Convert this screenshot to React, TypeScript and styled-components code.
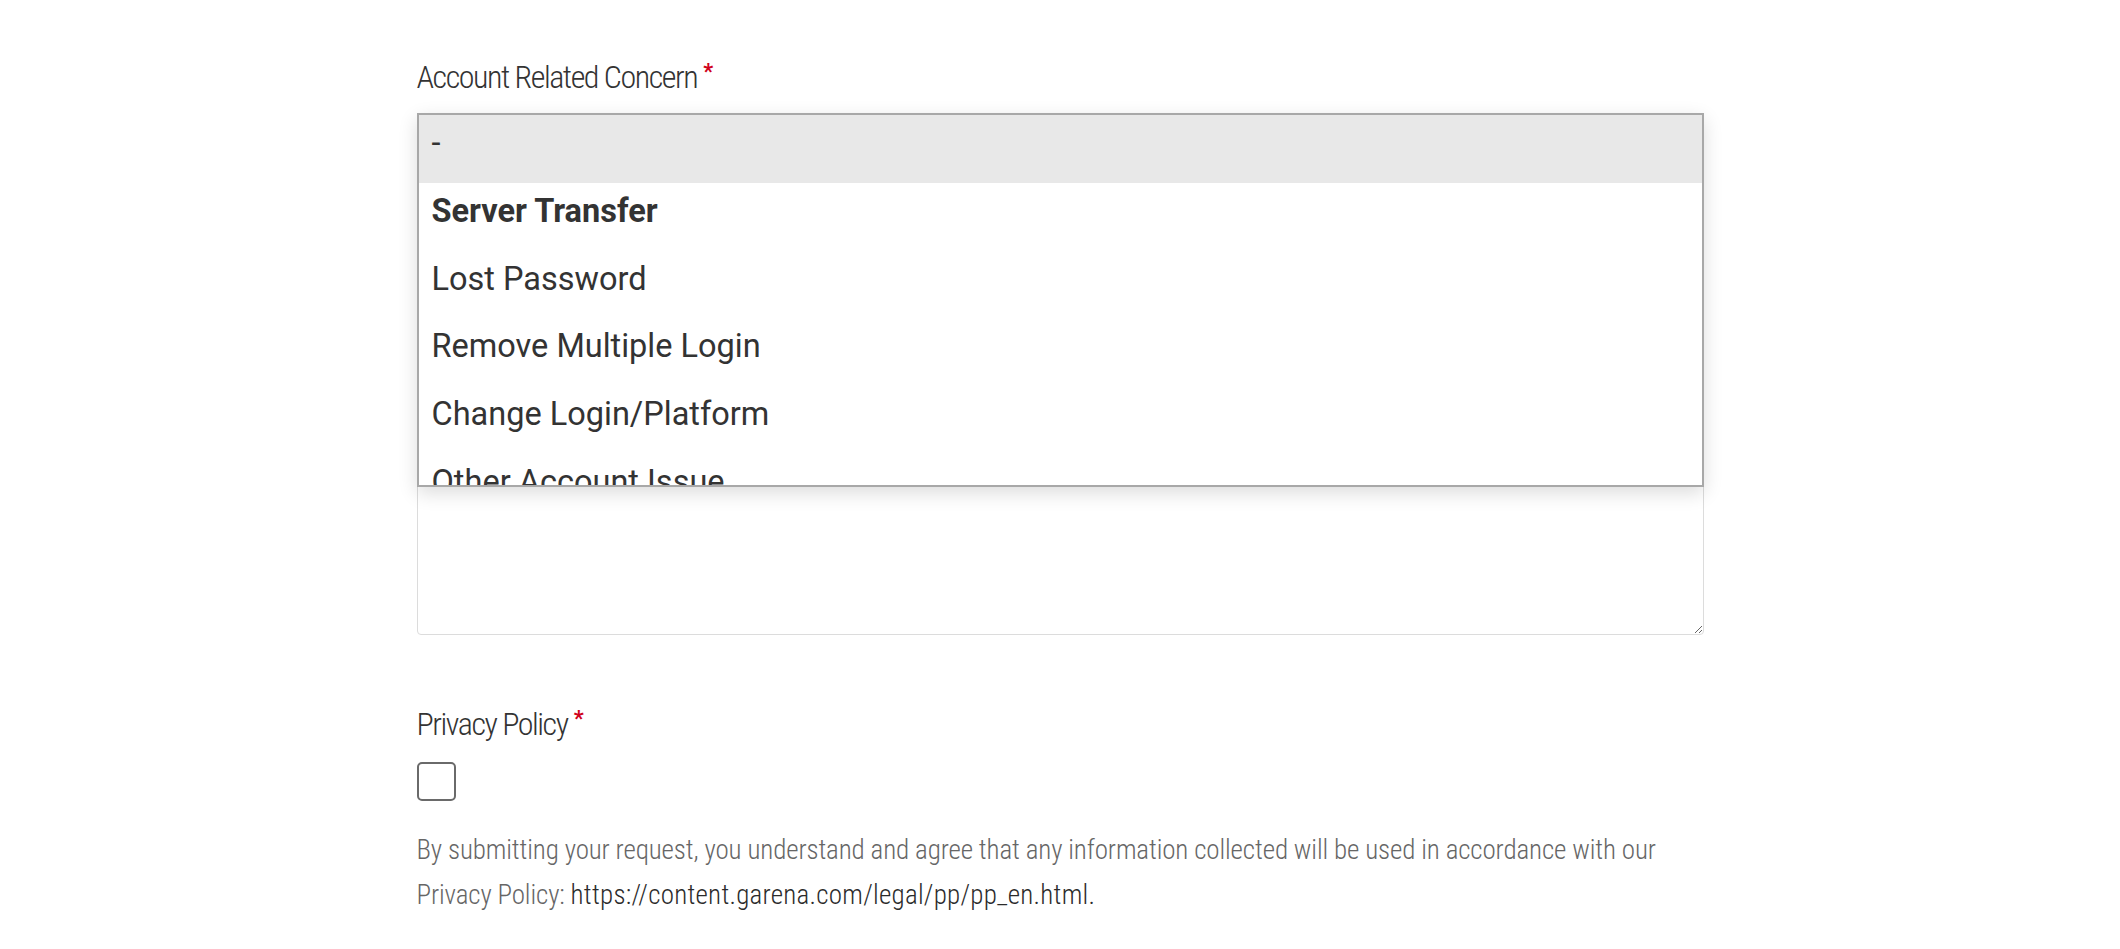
import React from "react";
import styled, { createGlobalStyle } from "styled-components";

const GlobalStyle = createGlobalStyle`
  html, body { margin: 0; padding: 0; background: #fff; }
  body { font-family: Roboto, "Liberation Sans", sans-serif; }
  * { box-sizing: border-box; }
`;

const Page = styled.main`
  max-width: 1287px;
  margin: 0 auto;
  padding-top: 57px;
  display: flex;
  flex-direction: column;
`;

const FieldLabel = styled.label`
  display: block;
  font-family: Roboto, sans-serif;
  font-stretch: condensed;
  font-weight: 350;
  font-size: 32px;
  line-height: 40px;
  color: #333;
  letter-spacing: -1.45px;
`;

const Required = styled.span`
  color: #d0021b;
  font-weight: 700;
  font-size: 22px;
  margin-left: 6px;
  vertical-align: top;
  line-height: 30px;
  letter-spacing: 0;
`;

const FieldBody = styled.div`
  position: relative;
  margin-top: 16px;
`;

const Description = styled.textarea`
  display: block;
  width: 100%;
  height: 522px;
  border: 1.5px solid #dcdcdc;
  border-radius: 4px;
  resize: vertical;
  background: #fff;
  outline: none;
`;

const Listbox = styled.ul`
  position: absolute;
  top: 0;
  left: 0;
  right: 0;
  height: 374px;
  margin: 0;
  padding: 0;
  list-style: none;
  overflow: hidden;
  background: #fff;
  border: 2px solid #a8a8a8;
  box-shadow: 0 6px 18px rgba(0, 0, 0, 0.14);
`;

const Option = styled.li<{ $selected?: boolean; $bold?: boolean }>`
  height: 67.8px;
  padding: 0 13px 10px;
  line-height: 57.8px;
  font-family: Roboto, sans-serif;
  font-size: 32.5px;
  font-weight: ${(p) => (p.$bold ? 700 : 400)};
  color: #333;
  background: ${(p) => (p.$selected ? "#e8e8e8" : "#fff")};
  white-space: nowrap;
`;

const PrivacySection = styled.section`
  margin-top: 69px;
  display: flex;
  flex-direction: column;
  align-items: flex-start;
`;

const CheckBox = styled.input.attrs({ type: "checkbox" })`
  appearance: none;
  -webkit-appearance: none;
  margin: 18px 0 0;
  width: 39px;
  height: 39px;
  border: 2.5px solid #6a6a6a;
  border-radius: 5px;
  background: #fff;
`;

const Notice = styled.p`
  margin: 27px 0 0;
  font-family: Roboto, sans-serif;
  font-stretch: condensed;
  font-weight: 300;
  font-size: 27px;
  line-height: 44.5px;
  letter-spacing: -0.13px;
  color: #666;
`;

const Url = styled.span`
  color: #2b2b2b;
  letter-spacing: 0.25px;
`;

const options = [
  { label: "-", selected: true },
  { label: "Server Transfer", bold: true },
  { label: "Lost Password" },
  { label: "Remove Multiple Login" },
  { label: "Change Login/Platform" },
  { label: "Other Account Issue" },
];

export default function App() {
  return (
    <>
      <GlobalStyle />
      <Page>
        <FieldLabel>
          Account Related Concern<Required>*</Required>
        </FieldLabel>
        <FieldBody>
          <Description aria-label="Description" />
          <Listbox role="listbox">
            {options.map((o) => (
              <Option key={o.label} role="option" $selected={o.selected} $bold={o.bold}>
                {o.label}
              </Option>
            ))}
          </Listbox>
        </FieldBody>
        <PrivacySection>
          <FieldLabel>
            Privacy Policy<Required>*</Required>
          </FieldLabel>
          <CheckBox aria-label="Privacy Policy" />
          <Notice>
            By submitting your request, you understand and agree that any information collected will be used in
            accordance with our Privacy Policy: <Url>https://content.garena.com/legal/pp/pp_en.html.</Url>
          </Notice>
        </PrivacySection>
      </Page>
    </>
  );
}
